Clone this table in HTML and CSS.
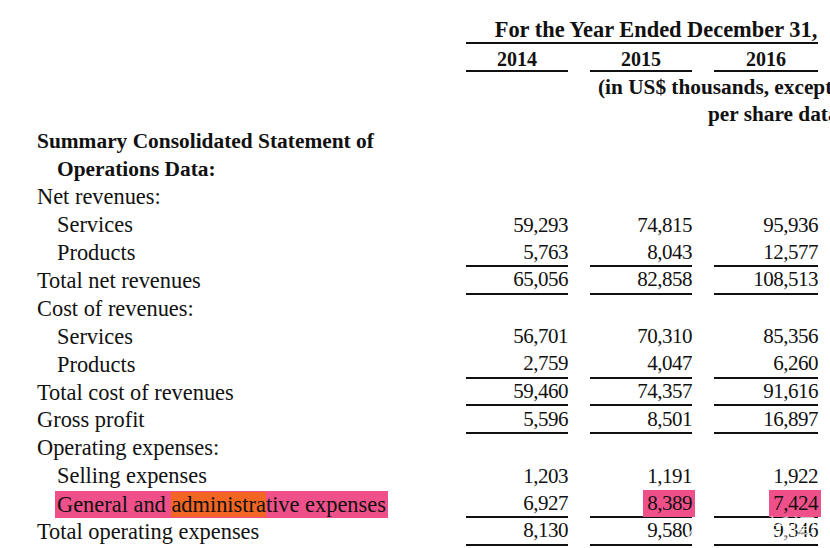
FILE: index.html
```html
<!DOCTYPE html>
<html>
<head>
<meta charset="utf-8">
<link rel="stylesheet" href="styles.css">
</head>
<body>
<div class="page">
  <div class="row">
    <div></div>
    <div class="head span3 u">For the Year Ended December 31,</div>
  </div>
  <div class="row">
    <div></div>
    <div class="head center u">2014</div>
    <div class="head center u">2015</div>
    <div class="head center u">2016</div>
  </div>
  <div class="row">
    <div></div>
    <div></div>
    <div class="head note1">(in US$ thousands, except</div>
  </div>
  <div class="row">
    <div></div>
    <div></div>
    <div></div>
    <div class="head note2">per share data)</div>
  </div>
  <div class="row">
    <div class="label bold">Summary Consolidated Statement of</div>
  </div>
  <div class="row">
    <div class="label bold sub">Operations Data:</div>
  </div>
  <div class="row">
    <div class="label">Net revenues:</div>
  </div>
  <div class="row">
    <div class="label sub">Services</div>
    <div class="num">59,293</div><div class="num">74,815</div><div class="num">95,936</div>
  </div>
  <div class="row">
    <div class="label sub">Products</div>
    <div class="num u">5,763</div><div class="num u">8,043</div><div class="num u">12,577</div>
  </div>
  <div class="row">
    <div class="label">Total net revenues</div>
    <div class="num u">65,056</div><div class="num u">82,858</div><div class="num u">108,513</div>
  </div>
  <div class="row">
    <div class="label">Cost of revenues:</div>
  </div>
  <div class="row">
    <div class="label sub">Services</div>
    <div class="num">56,701</div><div class="num">70,310</div><div class="num">85,356</div>
  </div>
  <div class="row">
    <div class="label sub">Products</div>
    <div class="num u">2,759</div><div class="num u">4,047</div><div class="num u">6,260</div>
  </div>
  <div class="row">
    <div class="label">Total cost of revenues</div>
    <div class="num u">59,460</div><div class="num u">74,357</div><div class="num u">91,616</div>
  </div>
  <div class="row">
    <div class="label">Gross profit</div>
    <div class="num u">5,596</div><div class="num u">8,501</div><div class="num u">16,897</div>
  </div>
  <div class="row">
    <div class="label">Operating expenses:</div>
  </div>
  <div class="row">
    <div class="label sub">Selling expenses</div>
    <div class="num">1,203</div><div class="num">1,191</div><div class="num">1,922</div>
  </div>
  <div class="row">
    <div class="label sub"><span class="hl">General and <span class="hl-o">administra</span>tive expenses</span></div>
    <div class="num u">6,927</div><div class="num u"><span class="hl hl-num">8,389</span></div><div class="num u"><span class="hl hl-num">7,424</span></div>
  </div>
  <div class="row">
    <div class="label">Total operating expenses</div>
    <div class="num u">8,130</div><div class="num u">9,580</div><div class="num u">9,346</div>
  </div>
</div>
<div class="watermark">ZAKER新闻</div>
</body>
</html>
```
FILE: styles.css
```css
html, body {
  margin: 0;
  padding: 0;
  background: #fff;
  overflow: hidden;
}
body {
  width: 830px;
  height: 548px;
  position: relative;
  font-family: "Liberation Serif", "Times New Roman", serif;
  color: #111;
}
.page {
  padding-top: 16px;
}
.row {
  display: grid;
  grid-template-columns: 444px 102px 102px 104px;
  column-gap: 22px;
  height: 27.9px;
}
.row > div {
  box-sizing: border-box;
  height: 27.9px;
  display: flex;
  align-items: center;
  white-space: nowrap;
}
.u {
  border-bottom: 2px solid #111;
}
.head {
  font-weight: bold;
  font-size: 20px;
}
.span3 {
  grid-column: 2 / 5;
  justify-content: center;
  padding: 3px 0 0 28px;
  font-size: 22.4px;
}
.center {
  justify-content: center;
  padding-top: 5px;
}
.note1 {
  grid-column: 3 / 5;
  padding: 4px 0 0 8px;
  font-size: 21.3px;
}
.note2 {
  margin-left: -6px;
  padding-top: 2px;
  font-size: 21.3px;
}
.label {
  font-size: 22.4px;
  padding-left: 37px;
  grid-column: 1 / 2;
}
.label.sub {
  padding-left: 57px;
}
.bold {
  font-weight: bold;
  font-size: 21.4px;
}
.num {
  font-size: 21px;
  justify-content: flex-end;
  letter-spacing: -0.5px;
}
.hl {
  background: #f0508a;
  margin-left: -2px;
  padding: 0 2px;
  line-height: 27px;
}
.hl-o {
  background: #f26522;
}
.hl-num {
  margin-left: 0;
  margin-right: -3px;
  padding: 0 3px 0 4px;
}
.watermark {
  position: absolute;
  left: 686px;
  top: 508px;
  font-family: "Noto Sans CJK SC", "DejaVu Sans", sans-serif;
  font-size: 25px;
  font-weight: 300;
  letter-spacing: 1px;
  color: rgba(255, 255, 255, 0.8);
}
```
